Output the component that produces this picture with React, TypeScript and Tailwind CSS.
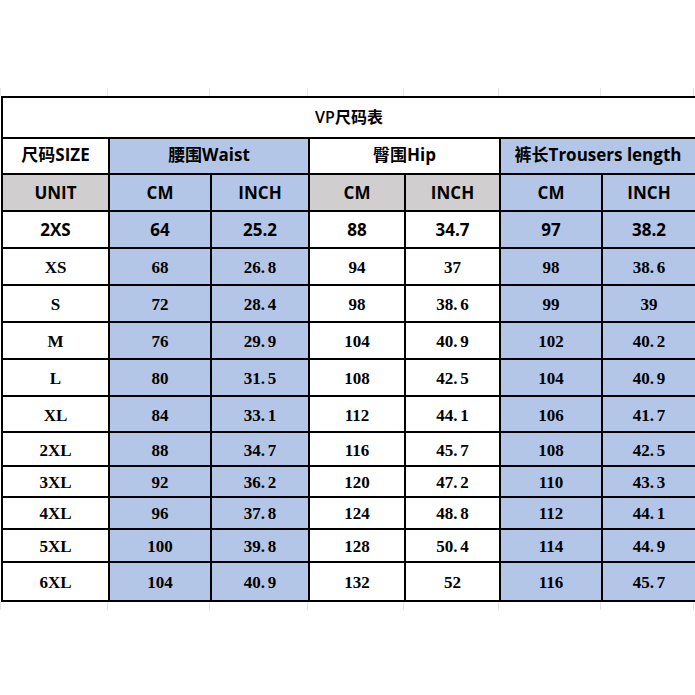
import React from 'react';

type Row = { size: string; h: string; v: string[] };

const rows: Row[] = [
  { size: '2XS', h: 'h-[37px]', v: ['64', '25.2', '88', '34.7', '97', '38.2'] },
  { size: 'XS', h: 'h-[37px]', v: ['68', '26.8', '94', '37', '98', '38.6'] },
  { size: 'S', h: 'h-[37px]', v: ['72', '28.4', '98', '38.6', '99', '39'] },
  { size: 'M', h: 'h-[36.5px]', v: ['76', '29.9', '104', '40.9', '102', '40.2'] },
  { size: 'L', h: 'h-[37.5px]', v: ['80', '31.5', '108', '42.5', '104', '40.9'] },
  { size: 'XL', h: 'h-[36px]', v: ['84', '33.1', '112', '44.1', '106', '41.7'] },
  { size: '2XL', h: 'h-[34px]', v: ['88', '34.7', '116', '45.7', '108', '42.5'] },
  { size: '3XL', h: 'h-[30px]', v: ['92', '36.2', '120', '47.2', '110', '43.3'] },
  { size: '4XL', h: 'h-[32px]', v: ['96', '37.8', '124', '48.8', '112', '44.1'] },
  { size: '5XL', h: 'h-[33px]', v: ['100', '39.8', '128', '50.4', '114', '44.9'] },
  { size: '6XL', h: 'h-[39.5px]', v: ['104', '40.9', '132', '52', '116', '45.7'] },
];

const blue = 'bg-[#b4c6e7]';
const gray = 'bg-[#d0cece]';
const cell = 'border-2 border-black text-center align-middle p-0';
const sans = "font-['Open_Sans','Noto_Sans_CJK_SC',sans-serif] font-bold text-[17px]";
const serif = "font-['Liberation_Serif','Noto_Sans_CJK_SC',serif] font-bold text-[17px] pt-[3px]";

// SimSun-style spacing: the decimal point takes a full digit cell
const Num = ({ n }: { n: string }) => {
  const [a, b] = n.split('.');
  if (b === undefined) return <>{n}</>;
  return (
    <>
      {a}
      <span className="inline-block w-[7px] text-left">.</span>
      {b}
    </>
  );
};

const colBg = (i: number) => (i < 2 || i > 3 ? blue : 'bg-white');
const ticks = [107, 102, 98, 96, 95, 102, 93];

const Ticks = () => (
  <div className="flex h-[8px]">
    <div className="w-[1px] border-r border-[#e4e4e4]" />
    {ticks.map((w, i) => (
      <div key={i} style={{ width: w }} className="border-r border-[#e4e4e4]" />
    ))}
  </div>
);

const App: React.FC = () => {
  return (
    <div className="w-[695px] h-[695px] overflow-hidden bg-white text-black pt-[88px]">
      <Ticks />
      <table className="table-fixed border-collapse w-[700px] ml-[1px]">
        <colgroup>
          <col className="w-[107px]" />
          <col className="w-[102px]" />
          <col className="w-[98px]" />
          <col className="w-[96px]" />
          <col className="w-[95px]" />
          <col className="w-[102px]" />
          <col className="w-[100px]" />
        </colgroup>
        <tbody>
          <tr className="h-[40.5px]">
            <td colSpan={7} className={`${cell} pr-[6px] font-['Open_Sans','Noto_Sans_CJK_SC',sans-serif] text-[16px] font-semibold`}>
              VP尺码表
            </td>
          </tr>
          <tr className="h-[36.5px]">
            <td className={`${cell} ${sans} pb-[3px]`}>尺码SIZE</td>
            <td colSpan={2} className={`${cell} ${sans} ${blue} pb-[3px]`}>腰围Waist</td>
            <td colSpan={2} className={`${cell} ${sans} pb-[3px]`}>臀围Hip</td>
            <td colSpan={2} className={`${cell} ${sans} ${blue} pr-[6px] pb-[3px]`}>裤长Trousers length</td>
          </tr>
          <tr className="h-[37px]">
            <td className={`${cell} ${sans} ${gray}`}>UNIT</td>
            <td className={`${cell} ${sans} ${blue}`}>CM</td>
            <td className={`${cell} ${sans} ${blue}`}>INCH</td>
            <td className={`${cell} ${sans} ${gray}`}>CM</td>
            <td className={`${cell} ${sans} ${gray}`}>INCH</td>
            <td className={`${cell} ${sans} ${blue}`}>CM</td>
            <td className={`${cell} ${sans} ${blue} pr-[6px]`}>INCH</td>
          </tr>
          {rows.map((r, ri) => {
            const font = ri === 0 ? sans : serif;
            return (
              <tr key={r.size} className={r.h}>
                <td className={`${cell} ${font}`}>{r.size}</td>
                {r.v.map((n, i) => (
                  <td key={i} className={`${cell} ${font} ${colBg(i)} ${i === 5 ? 'pr-[6px]' : ''}`}>
                    {ri === 0 ? n : <Num n={n} />}
                  </td>
                ))}
              </tr>
            );
          })}
        </tbody>
      </table>
      <Ticks />
    </div>
  );
};

export default App;
